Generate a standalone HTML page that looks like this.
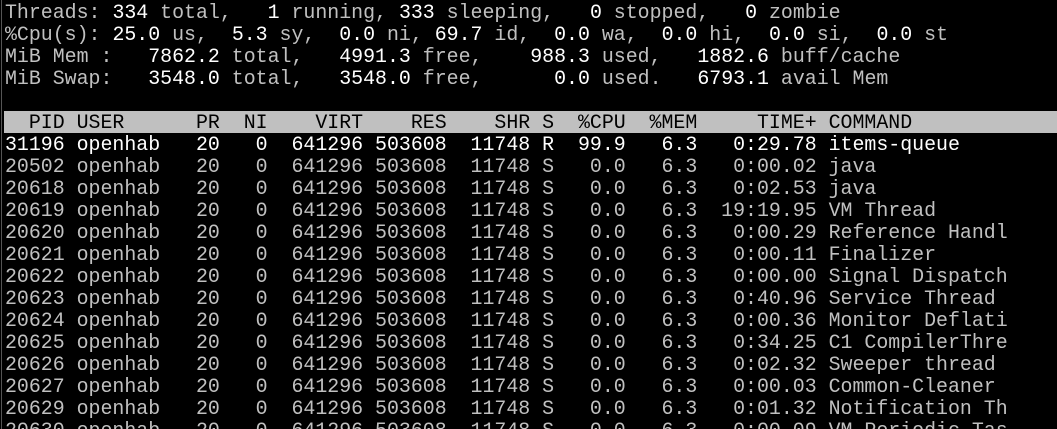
<!DOCTYPE html>
<html><head><meta charset="utf-8"><style>
html,body{margin:0;padding:0;background:#000;width:1057px;height:429px;overflow:hidden;position:relative}
.l{position:absolute;left:5px;height:22px;line-height:22px;white-space:pre;font-family:"Liberation Mono",monospace;font-size:19.9px;color:#c0c0c0}
b{font-weight:normal;color:#fff}
.hd{position:absolute;left:4px;right:0;top:111px;height:22px;background:#c0c0c0}
.edge{position:absolute;left:1px;top:0;width:1px;height:429px;background:#555}
</style></head><body>
<div class="edge"></div>
<div class="l" style="top:2px">Threads: <b>334</b> total,   <b>1</b> running, <b>333</b> sleeping,   <b>0</b> stopped,   <b>0</b> zombie</div>
<div class="l" style="top:24px">%Cpu(s): <b>25.0</b> us,  <b>5.3</b> sy,  <b>0.0</b> ni, <b>69.7</b> id,  <b>0.0</b> wa,  <b>0.0</b> hi,  <b>0.0</b> si,  <b>0.0</b> st</div>
<div class="l" style="top:46px">MiB Mem :   <b>7862.2</b> total,   <b>4991.3</b> free,    <b>988.3</b> used,   <b>1882.6</b> buff/cache</div>
<div class="l" style="top:68px">MiB Swap:   <b>3548.0</b> total,   <b>3548.0</b> free,      <b>0.0</b> used.   <b>6793.1</b> avail Mem</div>
<div class="hd"></div>
<div class="l" style="top:112px;color:#000">  PID USER      PR  NI    VIRT    RES    SHR S  %CPU  %MEM     TIME+ COMMAND</div>
<div class="l" style="top:134px;color:#fff">31196 openhab   20   0  641296 503608  11748 R  99.9   6.3   0:29.78 items-queue</div>
<div class="l" style="top:156px">20502 openhab   20   0  641296 503608  11748 S   0.0   6.3   0:00.02 java</div>
<div class="l" style="top:178px">20618 openhab   20   0  641296 503608  11748 S   0.0   6.3   0:02.53 java</div>
<div class="l" style="top:200px">20619 openhab   20   0  641296 503608  11748 S   0.0   6.3  19:19.95 VM Thread</div>
<div class="l" style="top:222px">20620 openhab   20   0  641296 503608  11748 S   0.0   6.3   0:00.29 Reference Handl</div>
<div class="l" style="top:244px">20621 openhab   20   0  641296 503608  11748 S   0.0   6.3   0:00.11 Finalizer</div>
<div class="l" style="top:266px">20622 openhab   20   0  641296 503608  11748 S   0.0   6.3   0:00.00 Signal Dispatch</div>
<div class="l" style="top:288px">20623 openhab   20   0  641296 503608  11748 S   0.0   6.3   0:40.96 Service Thread</div>
<div class="l" style="top:310px">20624 openhab   20   0  641296 503608  11748 S   0.0   6.3   0:00.36 Monitor Deflati</div>
<div class="l" style="top:332px">20625 openhab   20   0  641296 503608  11748 S   0.0   6.3   0:34.25 C1 CompilerThre</div>
<div class="l" style="top:354px">20626 openhab   20   0  641296 503608  11748 S   0.0   6.3   0:02.32 Sweeper thread</div>
<div class="l" style="top:376px">20627 openhab   20   0  641296 503608  11748 S   0.0   6.3   0:00.03 Common-Cleaner</div>
<div class="l" style="top:398px">20629 openhab   20   0  641296 503608  11748 S   0.0   6.3   0:01.32 Notification Th</div>
<div class="l" style="top:420px">20630 openhab   20   0  641296 503608  11748 S   0.0   6.3   0:00.09 VM Periodic Tas</div>
</body></html>
